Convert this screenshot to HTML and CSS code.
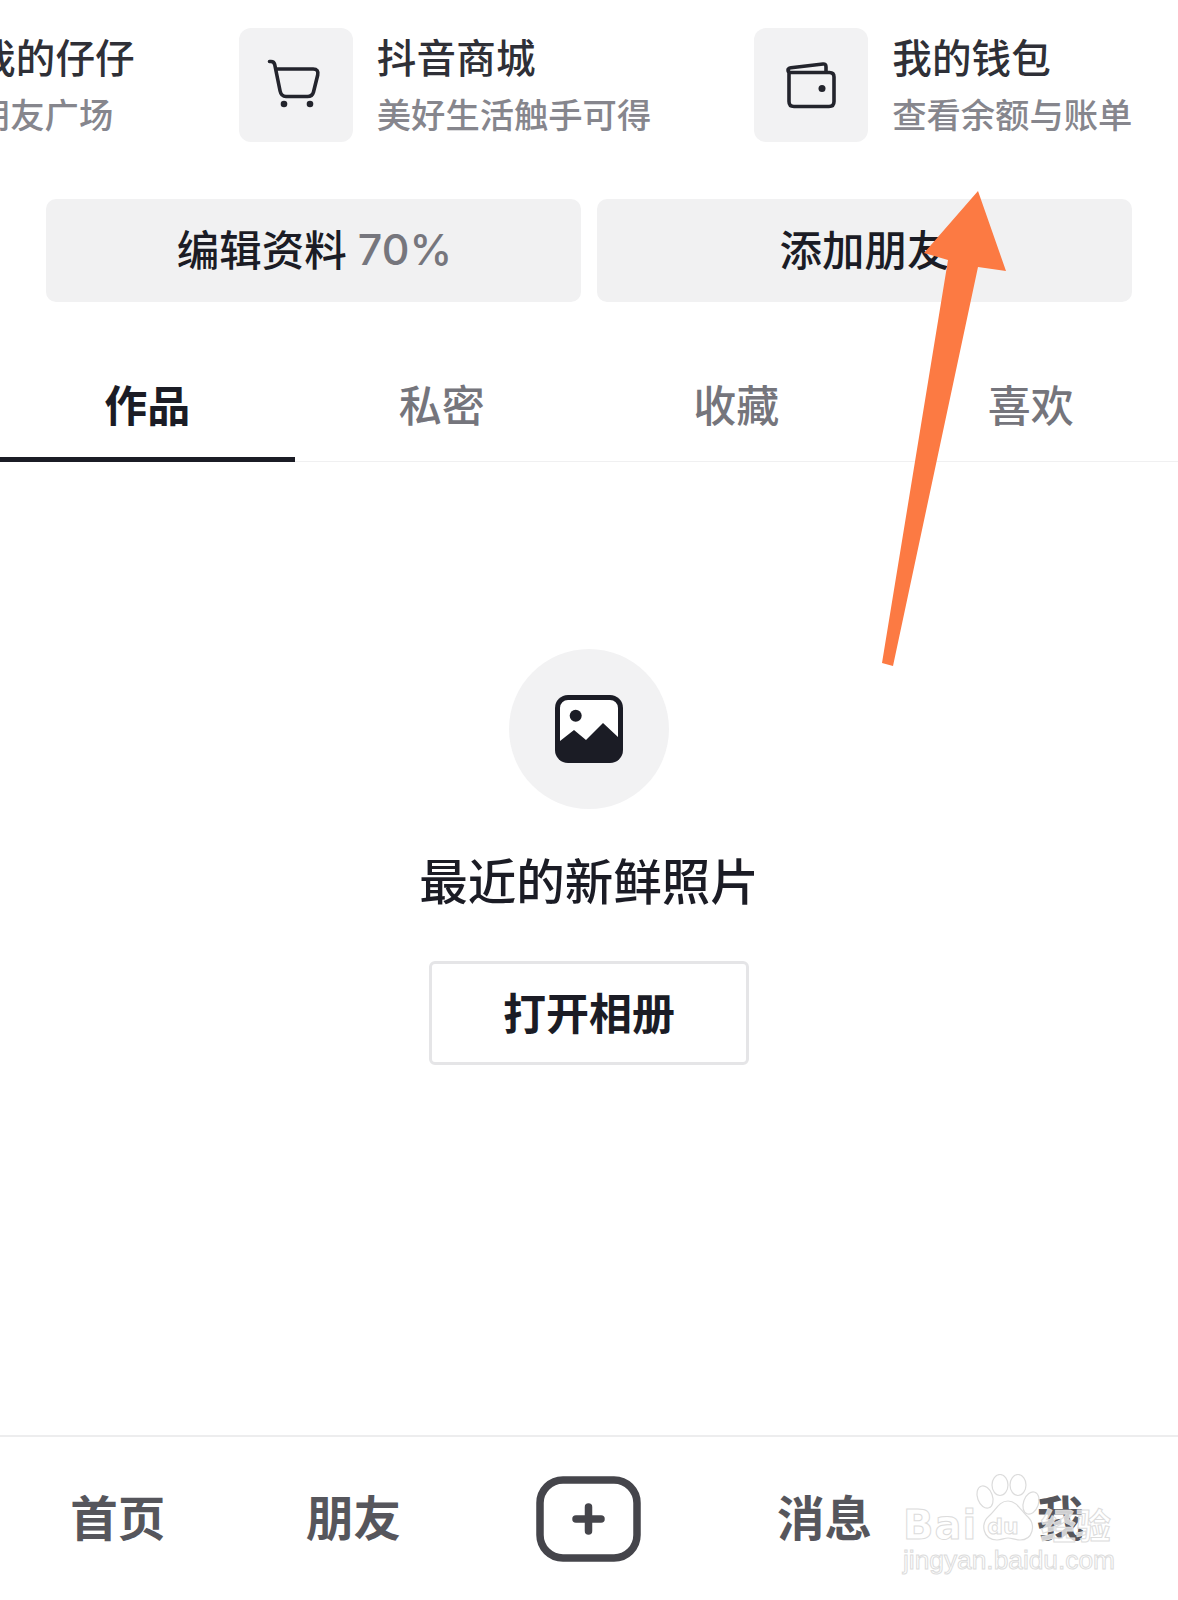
FILE: index.html
```html
<!DOCTYPE html>
<html lang="zh-CN">
<head>
<meta charset="utf-8">
<title>我的</title>
<link rel="stylesheet" href="styles.css">
</head>
<body>
<div class="page">
  <div class="services">
    <div class="service service-first">
      <div class="service-icon"></div>
      <div class="service-text"><div class="service-title">我的仔仔</div><div class="service-sub">朋友广场</div></div>
    </div>
    <div class="service">
      <div class="service-icon">
        <svg class="fill-box" viewBox="0 0 114 114" fill="none" stroke="#23242c" stroke-width="3.6" stroke-linecap="round" stroke-linejoin="round">
          <path d="M30.5 33.5h1.5q3 0 3.7 3l5.4 26.500q1.100 5.500 5.900 5.500h21.500q4.800 0 6-4.500l4.200-17q1.200-6-4.600-6H37"/>
          <circle cx="45" cy="76" r="3.300" fill="#23242c" stroke="none"/>
          <circle cx="71" cy="76" r="3.300" fill="#23242c" stroke="none"/>
        </svg>
      </div>
      <div class="service-text"><div class="service-title">抖音商城</div><div class="service-sub">美好生活触手可得</div></div>
    </div>
    <div class="service">
      <div class="service-icon">
        <svg class="fill-box" viewBox="0 0 114 114" fill="none" stroke="#23242c" stroke-width="3.600" stroke-linecap="round" stroke-linejoin="round">
          <path d="M35 45v28.500q0 5 5 5h35q5 0 5-5V49q0-4.500-4.500-4.500H37q-3 0-3-2.500q0-1.800 3-2.300L69 36q3-.3 3 3v5"/>
          <circle cx="68" cy="60.500" r="3.500" fill="#23242c" stroke="none"/>
        </svg>
      </div>
      <div class="service-text"><div class="service-title">我的钱包</div><div class="service-sub">查看余额与账单</div></div>
    </div>
  </div>

  <div class="actions">
    <div class="action action-progress"><span class="action-label">编辑资料</span> <span class="action-note">70%</span></div>
    <div class="action"><span class="action-label">添加朋友</span></div>
  </div>

  <div class="tabs">
    <div class="tab tab-active">作品</div>
    <div class="tab">私密</div>
    <div class="tab">收藏</div>
    <div class="tab">喜欢</div>
  </div>

  <div class="empty">
    <div class="empty-circle">
      <svg class="empty-icon" viewBox="0 0 68 68">
        <rect width="68" height="68" rx="13" fill="#1b1c25"/>
        <path d="M5 46V13a8 8 0 0 1 8-8h42a8 8 0 0 1 8 8v29L48 28 31 45 19 35z" fill="#fff"/>
        <circle cx="20.700" cy="20.700" r="6" fill="#1b1c25"/>
      </svg>
    </div>
    <div class="empty-title">最近的新鲜照片</div>
    <div class="empty-button"><span class="empty-button-label">打开相册</span></div>
  </div>

  <nav class="footer">
    <div class="nav-item"><span class="nav-label">首页</span></div>
    <div class="nav-item"><span class="nav-label">朋友</span></div>
    <div class="nav-item">
      <svg class="plus" viewBox="0 0 105 86" fill="none" stroke="#45454b" stroke-linecap="round">
        <rect x="4" y="4" width="97" height="78" rx="23" stroke-width="7.500"/>
        <path d="M52.500 31v24M40 43h25" stroke-width="7.500"/>
      </svg>
    </div>
    <div class="nav-item"><span class="nav-label">消息</span></div>
    <div class="nav-item"><span class="nav-label">我</span></div>
  </nav>

  <svg class="arrow" viewBox="0 0 140 490">
    <path d="M99 1 127 81 99 77 14 476 3 473 69 70 45 63z" fill="#fc7a43"/>
  </svg>

  <div class="watermark">
    <svg class="paw" viewBox="0 0 66 68" fill="none" stroke="#dcdcdc" stroke-width="1.200">
      <ellipse cx="10" cy="23" rx="7.500" ry="11.500" transform="rotate(-20 10 23)"/>
      <ellipse cx="25" cy="11" rx="8" ry="10.500"/>
      <ellipse cx="43" cy="11" rx="8" ry="10.500"/>
      <ellipse cx="56" cy="29" rx="7.500" ry="11.500" transform="rotate(20 56 29)"/>
      <path d="M33 27c-9 0-12 9-19 15-9 8-6 24 8 24 5 0 7-2 11-2s7 2 12 2c13 0 16-15 8-23-7-6-11-16-20-16z"/>
    </svg>
    <div class="wm-brand">Bai<span class="wm-du">du</span><span class="wm-cn">经验</span></div>
    <div class="wm-url">jingyan.baidu.com</div>
  </div>
</div>
</body>
</html>
```

FILE: styles.css
```css
* { box-sizing: border-box; }
html, body { margin: 0; padding: 0; background: #fff; }
.page {
  position: relative;
  width: 1178px;
  height: 1600px;
  overflow: hidden;
  display: flex;
  flex-direction: column;
  background: #fff;
  font-family: "Noto Sans CJK SC", "Noto Sans", sans-serif;
  color: #1b1c25;
}
.services {
  display: flex;
  gap: 103px;
  margin-left: -162px;
  padding-top: 28px;
  flex: none;
}
.service { display: flex; gap: 24px; flex: none; height: 114px; }
.service-first { margin-right: 1px; }
.service-icon {
  width: 114px;
  height: 114px;
  background: #f2f2f3;
  border-radius: 12px;
  flex: none;
}
.fill-box { display: block; width: 114px; height: 114px; }
.service-text { display: flex; flex-direction: column; }
.service-title {
  font-size: 39.500px;
  line-height: 56px;
  font-weight: 500;
  color: #2f3037;
  letter-spacing: 0.200px;
}
.service-sub {
  font-size: 34.300px;
  line-height: 58px;
  font-weight: 500;
  color: #86868d;
}
.actions {
  display: flex;
  gap: 16px;
  padding: 0 46px;
  margin-top: 57px;
  flex: none;
}
.action {
  flex: 1 1 50%;
  min-width: 0;
  height: 103px;
  background: #f1f1f2;
  border-radius: 10px;
  display: flex;
  align-items: center;
  justify-content: center;
  gap: 11px;
  padding-bottom: 6px;
  font-size: 42.500px;
  font-weight: 500;
  color: #1b1c25;
}
.action-progress { padding-left: 2px; }
.action-note {
  margin-top: 2px;
  font-family: Inter, "Noto Sans", sans-serif;
  font-size: 43px;
  font-weight: 500;
  color: #76767d;
}
.tabs {
  display: flex;
  margin-top: 59px;
  box-shadow: inset 0 -1px 0 #f0f0f1;
  flex: none;
}
.tab {
  flex: 1;
  height: 101px;
  padding-top: 12px;
  line-height: 60px;
  text-align: center;
  font-size: 43px;
  font-weight: 500;
  color: #75757c;
}
.tab-active {
  font-weight: 700;
  color: #1b1c25;
  border-bottom: 5px solid #1b1c25;
}
.empty {
  display: flex;
  flex-direction: column;
  align-items: center;
  padding-top: 187px;
  flex: none;
}
.empty-circle {
  width: 160px;
  height: 160px;
  border-radius: 50%;
  background: #f2f2f3;
  display: flex;
  align-items: center;
  justify-content: center;
}
.empty-icon { width: 68px; height: 68px; display: block; }
.empty-title {
  margin-top: 38px;
  font-size: 48.500px;
  line-height: 64px;
  font-weight: 500;
  color: #1b1c25;
}
.empty-button {
  margin-top: 50px;
  width: 320px;
  height: 104px;
  border: 3px solid #e5e5e7;
  border-radius: 6px;
  display: flex;
  align-items: center;
  justify-content: center;
  font-size: 43px;
  font-weight: 700;
  color: #1b1c25;
}
.empty-button-label { margin-top: -5px; }
.footer {
  margin-top: auto;
  height: 165px;
  border-top: 2px solid #ededee;
  display: grid;
  grid-template-columns: repeat(5, 1fr);
  flex: none;
}
.nav-item {
  display: flex;
  align-items: center;
  justify-content: center;
  font-size: 47.500px;
  font-weight: 700;
  color: #56565c;
}
.nav-label { margin-top: -7px; }
.plus { width: 105px; height: 86px; display: block; }
.arrow {
  position: absolute;
  left: 879px;
  top: 190px;
  width: 140px;
  height: 490px;
}
.watermark {
  position: absolute;
  left: 903px;
  top: 1474px;
  width: 215px;
  height: 105px;
  font-family: "DejaVu Sans", sans-serif;
  font-weight: 700;
  color: rgba(255, 255, 255, 0.72);
}
.paw { position: absolute; left: 72px; top: 0; width: 66px; height: 68px; }
.wm-brand {
  position: absolute;
  left: 0;
  top: 24px;
  font-size: 40px;
  line-height: 52px;
  letter-spacing: 1px;
  white-space: nowrap;
  -webkit-text-stroke: 1px #dcdcdc;
}
.wm-du {
  position: relative;
  top: -5px;
  font-size: 22px;
  letter-spacing: 0;
  margin-left: 10px;
}
.wm-cn {
  font-family: "Noto Sans CJK SC", sans-serif;
  font-size: 35px;
  letter-spacing: 0;
  margin-left: 22px;
}
.wm-url {
  position: absolute;
  left: 0;
  top: 71px;
  font-family: "Liberation Sans", sans-serif;
  font-weight: 400;
  font-size: 26.300px;
  line-height: 30px;
  white-space: nowrap;
  -webkit-text-stroke: 1px #dcdcdc;
}
```
